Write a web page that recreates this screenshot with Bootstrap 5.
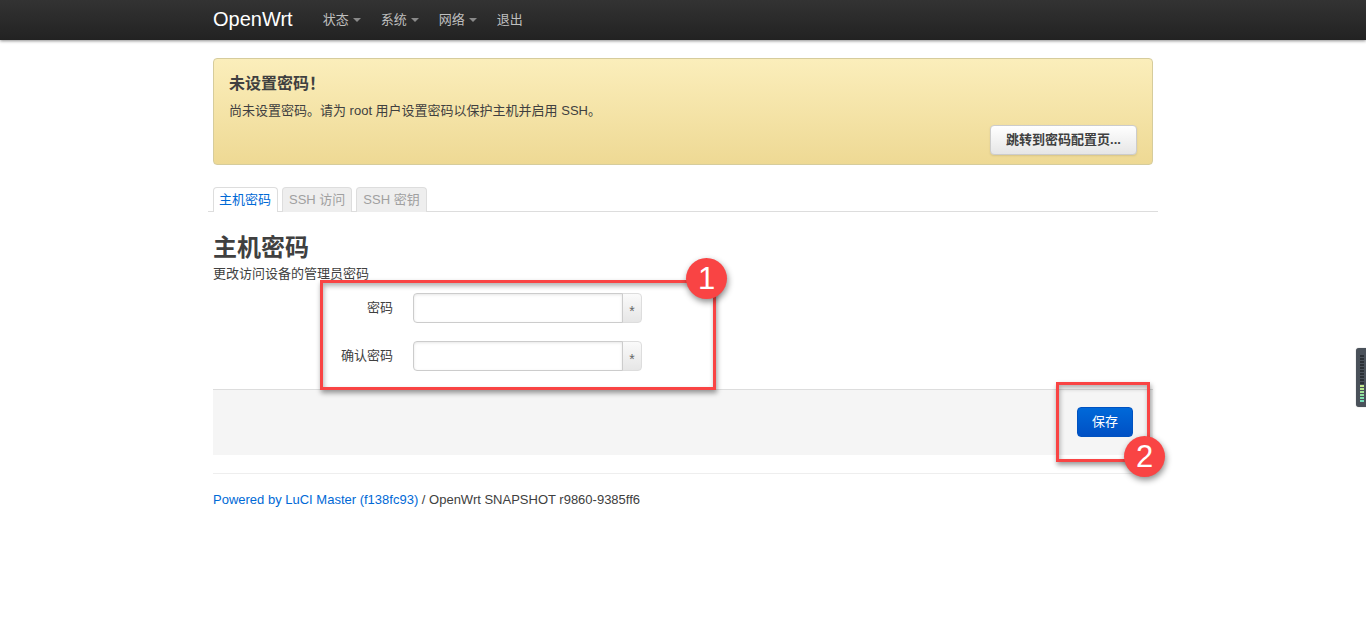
<!DOCTYPE html>
<html lang="zh-CN">
<head>
<meta charset="utf-8">
<title>OpenWrt</title>
<link href="https://cdn.jsdelivr.net/npm/bootstrap@5.3.0/dist/css/bootstrap.min.css" rel="stylesheet">
<style>
html,body{height:100%;}
body{font-family:"Liberation Sans","Noto Sans CJK SC",sans-serif;font-size:13px;line-height:18px;color:#404040;background:#fff;position:relative;overflow:hidden;}
.wrt-bar{height:40px;padding:0;background:linear-gradient(#333,#222);box-shadow:0 1px 3px rgba(0,0,0,.45);}
.wrt-inner{width:940px;margin:0 auto;height:40px;padding-bottom:2px;}
.wrt-brand{font-size:20px;color:#fff;text-decoration:none;line-height:36px;margin-right:30px;}
.wrt-menu{gap:20px;}
.wrt-link{color:#bfbfbf;text-decoration:none;font-size:13px;line-height:37px;display:flex;align-items:center;gap:4px;}
.wrt-caret{width:0;height:0;border-left:4px solid transparent;border-right:4px solid transparent;border-top:4px solid #8a8a8a;margin-top:1px;}
.wrt-main{width:940px;margin:0 auto;padding-top:18px;}
.wrt-alert{height:107px;margin:0;padding:14px 15px 9px;border:1px solid #d6cc9c;border-radius:4px;background:linear-gradient(#fbeebb,#eed994);color:#404040;display:flex;flex-direction:column;}
.wrt-alert h4{font-size:16px;font-weight:700;line-height:22px;margin:0 0 7px;}
.wrt-alert p{font-size:13px;line-height:18px;margin:0;}
.wrt-jump{align-self:flex-end;margin-top:auto;height:30px;width:147px;padding:0;font-size:13px;font-weight:700;color:#404040;background:linear-gradient(#fff,#e6e6e6);border:1px solid #ccc;border-radius:4px;box-shadow:0 1px 2px rgba(0,0,0,.1);line-height:28px;}
.wrt-tabs{margin:22px -5px 0 -5px;padding-left:5px;height:25px;gap:4px;border-bottom:1px solid #ddd;}
.wrt-tabs .nav-link{height:25px;padding:0 6px;line-height:24px;font-size:13px;color:#a0a0a0;background:#eee;border:1px solid #ddd;border-bottom:0;border-radius:4px 4px 0 0;margin:0;}
.wrt-tabs .nav-link.active{padding:0 6px 0 5px;color:#0069d6;background:#fff;border-color:#ddd;height:25px;}
.wrt-title{font-size:24px;font-weight:700;line-height:30px;margin:21px 0 0;color:#404040;}
.wrt-desc{font-size:13px;line-height:18px;margin:2px 0 0;}
.wrt-form{margin-top:10px;}
.wrt-row{height:30px;margin-bottom:18px;display:flex;align-items:center;}
.wrt-label{width:180px;text-align:right;margin:0;padding:0;font-size:13px;}
.wrt-group{width:229px;margin-left:20px;height:30px;flex-wrap:nowrap;}
.wrt-group .form-control{height:30px;min-height:0;padding:4px 6px;font-size:13px;border-color:#ccc;border-radius:4px 0 0 4px;box-shadow:inset 0 1px 3px rgba(0,0,0,.1);}
.wrt-group .input-group-text{width:20px;height:30px;padding:6px 0 0;justify-content:center;font-size:14px;color:#666;background:linear-gradient(#fafafa,#e6e6e6);border-color:#ddd;border-radius:0 4px 4px 0;}
.wrt-actions{height:66px;background:#f5f5f5;border-top:1px solid #ddd;display:flex;justify-content:flex-end;padding:17px 20px 0 0;}
.wrt-save{width:56px;height:30px;padding:0;font-size:13px;color:#fff;background:linear-gradient(#0069d9,#0050c4);border:1px solid #0052c0;border-radius:4px;line-height:28px;}
.wrt-save:hover{color:#fff;}
.wrt-rule{border:0;border-top:1px solid #eee;margin:18px 0 0;opacity:1;}
.wrt-foot{margin-top:17px;font-size:13px;line-height:18px;}
.wrt-foot a{color:#0069d6;text-decoration:none;}
.wrt-mark{position:absolute;border:3px solid #f94444;box-shadow:1px 3px 5px rgba(0,0,0,.4),inset 1px 3px 5px rgba(0,0,0,.3);}
.wrt-num{position:absolute;width:41px;height:41px;border-radius:50%;background:#f94444;color:#fff;font-size:31px;line-height:41px;text-align:center;box-shadow:1px 3px 6px rgba(0,0,0,.45);}
.wrt-side{position:absolute;left:1356px;top:348px;width:10px;height:59px;background:#4a515a;border-radius:3px 0 0 3px;box-shadow:0 0 1px rgba(0,0,0,.5);}
</style>
</head>
<body>
<nav class="navbar wrt-bar">
  <div class="wrt-inner d-flex align-items-center">
    <a class="wrt-brand" href="#">OpenWrt</a>
    <div class="d-flex wrt-menu">
      <a class="wrt-link" href="#">状态<span class="wrt-caret"></span></a>
      <a class="wrt-link" href="#">系统<span class="wrt-caret"></span></a>
      <a class="wrt-link" href="#">网络<span class="wrt-caret"></span></a>
      <a class="wrt-link" href="#">退出</a>
    </div>
  </div>
</nav>
<main class="wrt-main">
  <div class="alert wrt-alert" role="alert">
    <h4>未设置密码！</h4>
    <p>尚未设置密码。请为 root 用户设置密码以保护主机并启用 SSH。</p>
    <button class="btn wrt-jump" type="button">跳转到密码配置页...</button>
  </div>
  <ul class="nav wrt-tabs">
    <li class="nav-item"><a class="nav-link active" href="#">主机密码</a></li>
    <li class="nav-item"><a class="nav-link" href="#">SSH 访问</a></li>
    <li class="nav-item"><a class="nav-link" href="#">SSH 密钥</a></li>
  </ul>
  <h2 class="wrt-title">主机密码</h2>
  <div class="wrt-desc">更改访问设备的管理员密码</div>
  <form class="wrt-form">
    <div class="wrt-row">
      <label class="wrt-label">密码</label>
      <div class="input-group wrt-group"><input class="form-control" type="password"><span class="input-group-text">*</span></div>
    </div>
    <div class="wrt-row">
      <label class="wrt-label">确认密码</label>
      <div class="input-group wrt-group"><input class="form-control" type="password"><span class="input-group-text">*</span></div>
    </div>
  </form>
  <div class="wrt-actions"><button class="btn wrt-save" type="button">保存</button></div>
  <hr class="wrt-rule">
  <footer class="wrt-foot"><a href="#">Powered by LuCI Master (f138fc93)</a> / OpenWrt SNAPSHOT r9860-9385ff6</footer>
</main>
<div class="wrt-mark" style="left:320px;top:280px;width:396px;height:110px"></div>
<div class="wrt-mark" style="left:1056px;top:382px;width:94px;height:80px"></div>
<div class="wrt-num" style="left:686px;top:258px">1</div>
<div class="wrt-num" style="left:1124px;top:436px">2</div>
<div class="wrt-side">
  <svg class="d-block" width="10" height="59" viewBox="0 0 10 59" aria-hidden="true">
    <g fill="#2b3036"><rect x="4" y="7" width="4" height="2"/><rect x="4" y="10" width="4" height="2"/><rect x="4" y="13" width="4" height="2"/><rect x="4" y="16" width="4" height="2"/><rect x="4" y="19" width="4" height="2"/><rect x="4" y="22" width="4" height="2"/><rect x="4" y="25" width="4" height="2"/><rect x="4" y="28" width="4" height="2"/><rect x="4" y="31" width="4" height="2"/><rect x="4" y="34" width="4" height="2"/></g>
    <g><rect x="4" y="37" width="4" height="2" fill="#c5e88e"/><rect x="4" y="40" width="4" height="2" fill="#b5e58f"/><rect x="4" y="43" width="4" height="2" fill="#a2e296"/><rect x="4" y="46" width="4" height="2" fill="#90e0a0"/><rect x="4" y="49" width="4" height="2" fill="#80dfad"/><rect x="4" y="52" width="4" height="2" fill="#72ddb8"/></g>
  </svg>
</div>
</body>
</html>
